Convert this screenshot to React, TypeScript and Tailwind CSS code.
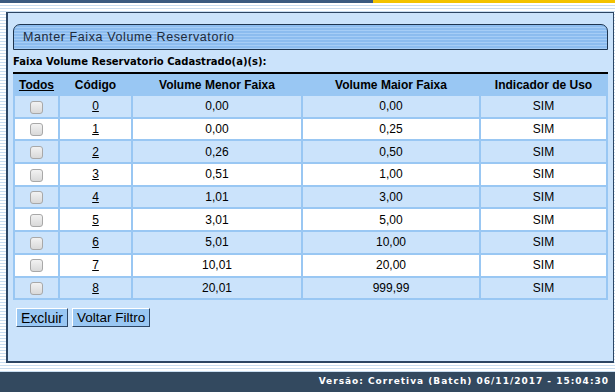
const rows = [
  { cod: "0", menor: "0,00", maior: "0,00" },
  { cod: "1", menor: "0,00", maior: "0,25" },
  { cod: "2", menor: "0,26", maior: "0,50" },
  { cod: "3", menor: "0,51", maior: "1,00" },
  { cod: "4", menor: "1,01", maior: "3,00" },
  { cod: "5", menor: "3,01", maior: "5,00" },
  { cod: "6", menor: "5,01", maior: "10,00" },
  { cod: "7", menor: "10,01", maior: "20,00" },
  { cod: "8", menor: "20,01", maior: "999,99" },
];

const Checkbox: React.FC = () => (
  <span className="inline-block w-[13px] h-[13px] rounded-[3px] border border-[#a8a8a8] bg-gradient-to-b from-[#f2f2f2] to-[#d9d9d9] align-middle" />
);

export default function App() {
  return (
    <div className="w-[615px] h-[392px] overflow-hidden flex flex-col bg-[repeating-linear-gradient(to_bottom,#ffffff_0px,#ffffff_2px,#c9ddf0_2px,#c9ddf0_3px)] font-['Liberation_Sans',Arial,sans-serif]">
      <div className="flex h-[3px] shrink-0">
        <div className="w-[373px] bg-[#3a5a80]" />
        <div className="flex-1 bg-[#f3c300]" />
      </div>
      <div className="h-[9px] shrink-0" />
      <div className="flex h-[351px] shrink-0 pl-[6px] pr-[1px]">
        <div className="flex-1 flex flex-col bg-[#cbe3fb] border-l-2 border-t border-b-2 border-r border-[#2c4563] px-[5px]">
          <div className="mt-[11px] h-[26px] flex items-center border border-[#1e3550] rounded-tl-[7px] rounded-tr-[7px] bg-[repeating-linear-gradient(to_bottom,#8cbcef_0px,#8cbcef_2px,#a6cdf6_2px,#a6cdf6_3px)] pl-[9px]">
            <span className="text-[12.5px] tracking-[0.6px] text-[#1d2a3a] pt-[1px]">
              Manter Faixa Volume Reservatorio
            </span>
          </div>
          <div className="mt-[5px] text-[10px] font-bold text-black font-['DejaVu_Sans',Verdana,sans-serif] leading-[14px]">
            Faixa Volume Reservatorio Cadastrado(a)(s):
          </div>
          <div className="mt-[3px] h-[2px] bg-black" />
          <table className="w-full border-separate border-spacing-[2px] bg-[#99c7f3] text-[12px] text-black table-fixed">
            <colgroup>
              <col className="w-[43px]" />
              <col className="w-[71px]" />
              <col className="w-[168px]" />
              <col className="w-[176px]" />
              <col />
            </colgroup>
            <thead>
              <tr className="h-[18px]">
                <th className="bg-[#99c7f3] font-bold underline text-center">Todos</th>
                <th className="bg-[#99c7f3] font-bold text-center">Código</th>
                <th className="bg-[#99c7f3] font-bold text-center">Volume Menor Faixa</th>
                <th className="bg-[#99c7f3] font-bold text-center">Volume Maior Faixa</th>
                <th className="bg-[#99c7f3] font-bold text-center">Indicador de Uso</th>
              </tr>
            </thead>
            <tbody>
              {rows.map((r, i) => {
                const bg = i % 2 === 0 ? "bg-[#cbe3fb]" : "bg-white";
                return (
                  <tr key={r.cod} className="h-[20.7px]">
                    <td className={`${bg} text-center`}>
                      <Checkbox />
                    </td>
                    <td className={`${bg} text-center underline`}>{r.cod}</td>
                    <td className={`${bg} text-center`}>{r.menor}</td>
                    <td className={`${bg} text-center`}>{r.maior}</td>
                    <td className={`${bg} text-center`}>SIM</td>
                  </tr>
                );
              })}
            </tbody>
          </table>
          <div className="mt-[8px] flex gap-[4px] pl-[3px]">
            <button className="h-[19px] px-[4px] bg-[#99c7f3] border border-t-white border-l-white border-b-[#2c4563] border-r-[#2c4563] text-[14px] leading-none text-black">
              Excluir
            </button>
            <button className="h-[19px] px-[4px] bg-[#99c7f3] border border-t-white border-l-white border-b-[#2c4563] border-r-[#2c4563] text-[13.5px] leading-none text-black">
              Voltar Filtro
            </button>
          </div>
        </div>
      </div>
      <div className="h-[9px] shrink-0" />
      <div className="flex-1 bg-[#33495f] flex items-center justify-end pr-[6px]">
        <span className="text-[9px] font-bold text-white tracking-[1px] font-['DejaVu_Sans',Verdana,sans-serif]">
          Versão: Corretiva (Batch) 06/11/2017 - 15:04:30
        </span>
      </div>
    </div>
  );
}
